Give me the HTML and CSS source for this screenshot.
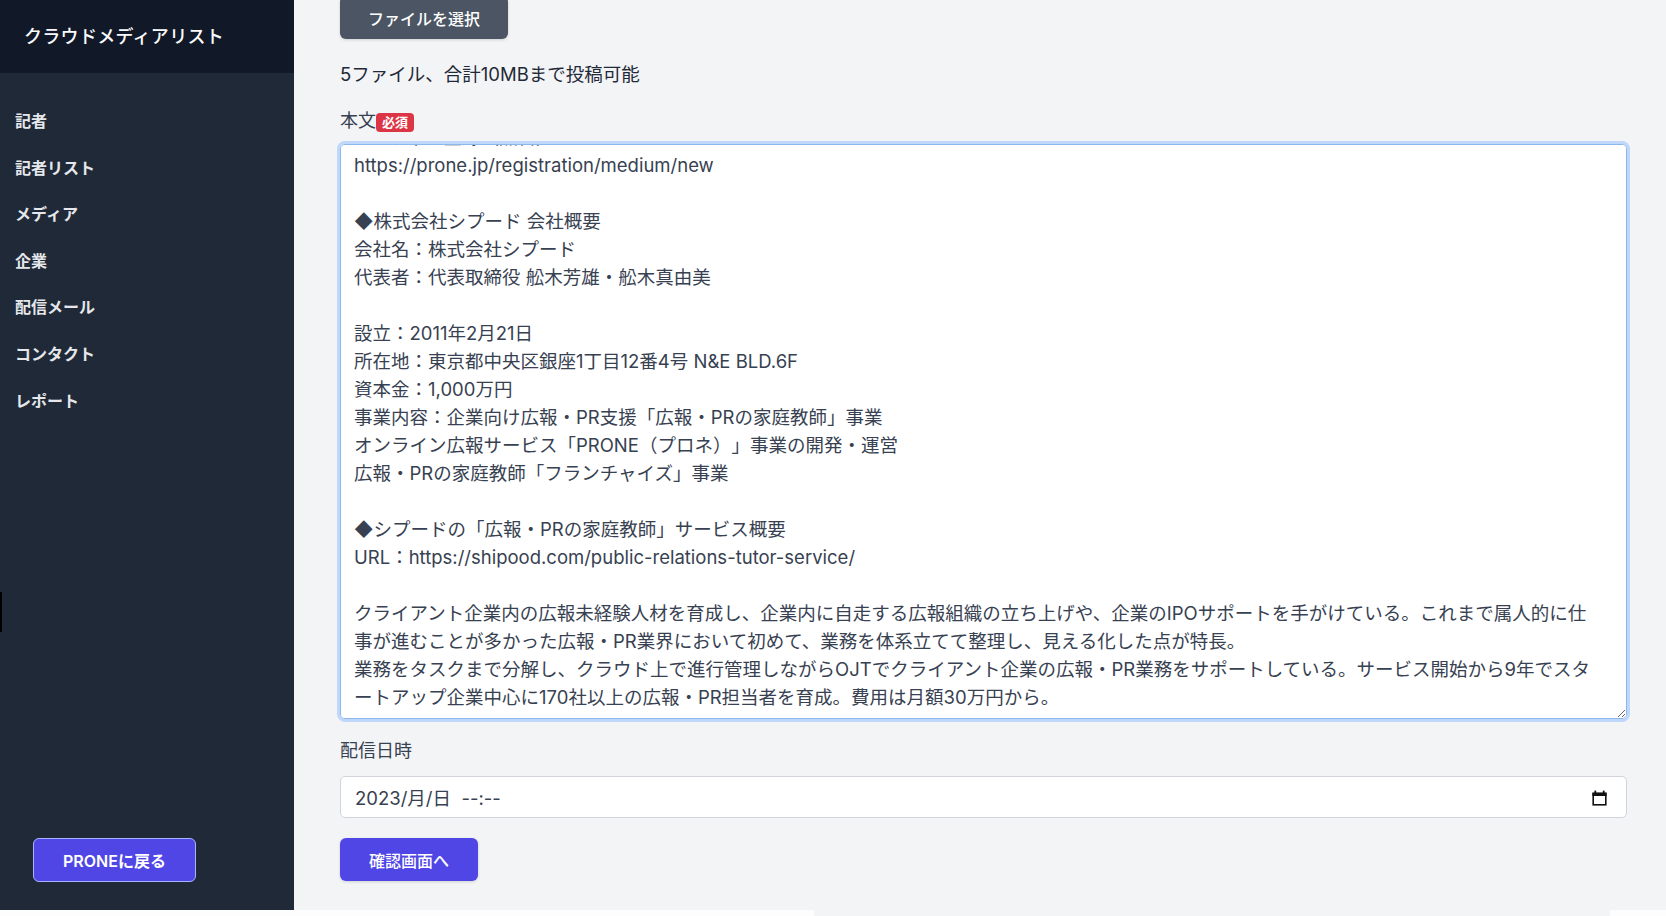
FILE: index.html
```html
<!DOCTYPE html>
<html lang="ja">
<head>
  <meta charset="UTF-8">
  <title>クラウドメディアリスト</title>
  <link rel="stylesheet" href="styles.css">
</head>
<body>
  <div class="app">
    <aside id="sidebar">
      <div class="sidebar-header">クラウドメディアリスト</div>
      <nav class="sidebar-nav">
        <a class="nav-item" href="#">記者</a>
        <a class="nav-item" href="#">記者リスト</a>
        <a class="nav-item" href="#">メディア</a>
        <a class="nav-item" href="#">企業</a>
        <a class="nav-item" href="#">配信メール</a>
        <a class="nav-item" href="#">コンタクト</a>
        <a class="nav-item" href="#">レポート</a>
      </nav>
      <button class="back-button">PRONEに戻る</button>
      <div class="edge-marker"></div>
    </aside>

    <main id="content">
      <button class="file-button">ファイルを選択</button>
      <p class="note">5ファイル、合計10MBまで投稿可能</p>

      <label class="field-label" for="body">本文<span class="badge">必須</span></label>
      <textarea id="body" class="body-input">株式会社シプードは、オンライン広報サービス「PRONE（プロネ）」において、記者・メディアへの一括配信機能の提供を開始いたしました。

■本件に関するお問い合わせ
株式会社シプード 広報担当

■メディア登録（無料）はこちらから
https://prone.jp/registration/medium/new

◆株式会社シプード 会社概要
会社名：株式会社シプード
代表者：代表取締役 舩木芳雄・舩木真由美

設立：2011年2月21日
所在地：東京都中央区銀座1丁目12番4号 N&amp;E BLD.6F
資本金：1,000万円
事業内容：企業向け広報・PR支援「広報・PRの家庭教師」事業
オンライン広報サービス「PRONE（プロネ）」事業の開発・運営
広報・PRの家庭教師「フランチャイズ」事業

◆シプードの「広報・PRの家庭教師」サービス概要
URL：https://shipood.com/public-relations-tutor-service/

クライアント企業内の広報未経験人材を育成し、企業内に自走する広報組織の立ち上げや、企業のIPOサポートを手がけている。これまで属人的に仕事が進むことが多かった広報・PR業界において初めて、業務を体系立てて整理し、見える化した点が特長。
業務をタスクまで分解し、クラウド上で進行管理しながらOJTでクライアント企業の広報・PR業務をサポートしている。サービス開始から9年でスタートアップ企業中心に170社以上の広報・PR担当者を育成。費用は月額30万円から。</textarea>

      <label class="date-label">配信日時</label>
      <div class="date-input">
        <span class="date-value">2023/月/日&nbsp; --:--</span>
        <svg class="calendar-icon" width="15" height="16" viewBox="0 0 15 16">
          <rect x="1.2" y="3.5" width="12.6" height="11.3" fill="none" stroke="#111" stroke-width="1.6"/>
          <rect x="0.4" y="2.6" width="14.2" height="3.4" fill="#111"/>
          <rect x="2.4" y="0.6" width="1.8" height="3" fill="#111"/>
          <rect x="10.8" y="0.6" width="1.8" height="3" fill="#111"/>
        </svg>
      </div>

      <button class="submit-button">確認画面へ</button>
    </main>
  </div>
  <div class="bottom-strip">
    <div class="strip-left"></div>
    <div class="strip-right"></div>
  </div>

  <script src="script.js"></script>
</body>
</html>
```

FILE: styles.css
```css
body {
  margin: 0;
  font-family: "Inter", "Noto Sans CJK JP", sans-serif;
  background-color: #f3f4f6;
  color: #1f2937;
  overflow: hidden;
  text-spacing-trim: space-all;
}

.app {
  display: flex;
  height: 910px;
}

/* Sidebar */
#sidebar {
  position: relative;
  width: 294px;
  flex-shrink: 0;
  display: flex;
  flex-direction: column;
  background-color: #1f2937;
}

.sidebar-header {
  height: 73px;
  display: flex;
  align-items: center;
  padding-left: 24px;
  padding-bottom: 3px;
  box-sizing: border-box;
  background-color: #111827;
  color: #f9fafb;
  font-size: 18px;
  font-weight: 500;
  letter-spacing: 0.3px;
}

.sidebar-nav {
  flex: 1;
  display: flex;
  flex-direction: column;
  padding-top: 25px;
}

.nav-item {
  padding: 0 15px;
  line-height: 46.6px;
  font-size: 16px;
  font-weight: 600;
  color: #e5e7eb;
  text-decoration: none;
}

.back-button {
  width: 163px;
  height: 44px;
  margin: 0 0 28px 33px;
  background-color: #4f46e5;
  border: 1px solid #a5b4fc;
  border-radius: 6px;
  color: white;
  font-family: inherit;
  font-size: 16px;
  font-weight: 600;
  cursor: pointer;
}

.edge-marker {
  position: absolute;
  left: 0;
  top: 592px;
  width: 2px;
  height: 40px;
  background-color: #000;
}

/* Main form */
#content {
  flex: 1;
  display: flex;
  flex-direction: column;
  align-items: flex-start;
  padding: 0 39px 0 46px;
  min-width: 0;
}

.file-button {
  margin-top: -4px;
  height: 43px;
  padding: 0 28px;
  background-color: #4b5563;
  border: none;
  border-radius: 6px;
  box-shadow: 0 1px 3px rgba(0, 0, 0, 0.15);
  color: white;
  font-family: inherit;
  font-size: 16px;
  font-weight: 500;
  cursor: pointer;
}

.note {
  margin: 21px 0 0;
  font-size: 18.5px;
  line-height: 28px;
  color: #1f2937;
}

.field-label,
.date-label {
  display: flex;
  align-items: center;
  font-size: 18px;
  line-height: 28px;
  color: #374151;
}

.field-label {
  margin-top: 19px;
}

.badge {
  height: 19px;
  padding: 0 6px;
  margin-top: 2px;
  background-color: #dc3545;
  border-radius: 4px;
  color: white;
  font-size: 13px;
  font-weight: 700;
  line-height: 19px;
}

.body-input {
  width: 100%;
  height: 575px;
  margin: 9px 0 0;
  padding: 8px 31px 6.6px 13px;
  box-sizing: border-box;
  background-color: white;
  border: 1px solid #8db6ee;
  border-radius: 5px;
  box-shadow: 0 0 0 3px #bfd7fb;
  outline: none;
  color: #374151;
  font-family: inherit;
  font-size: 18.5px;
  line-height: 28px;
  resize: vertical;
  scrollbar-width: none;
  text-spacing-trim: space-all;
}

.body-input::-webkit-scrollbar {
  display: none;
}

.date-label {
  margin-top: 18px;
}

.date-input {
  width: 100%;
  height: 42px;
  margin-top: 11px;
  padding: 0 19px 0 14px;
  box-sizing: border-box;
  display: flex;
  align-items: center;
  justify-content: space-between;
  background-color: white;
  border: 1px solid #d1d5db;
  border-radius: 5px;
  color: #374151;
  font-size: 18.5px;
}

.calendar-icon {
  margin-top: 1px;
}

.submit-button {
  margin-top: 20px;
  height: 43px;
  padding: 0 29px;
  background-color: #4f46e5;
  border: none;
  border-radius: 6px;
  box-shadow: 0 1px 3px rgba(0, 0, 0, 0.15);
  color: white;
  font-family: inherit;
  font-size: 16px;
  font-weight: 500;
  cursor: pointer;
}

.bottom-strip {
  display: flex;
  justify-content: space-between;
  height: 6px;
}

.strip-left {
  width: 814px;
  background-color: #fdfdfd;
}

.strip-right {
  width: 56px;
  background-color: #fdfdfd;
}
```

FILE: script.js
```js
// keep the textarea scrolled to the end of the body text
const body = document.getElementById('body');
body.scrollTop = body.scrollHeight;
```
